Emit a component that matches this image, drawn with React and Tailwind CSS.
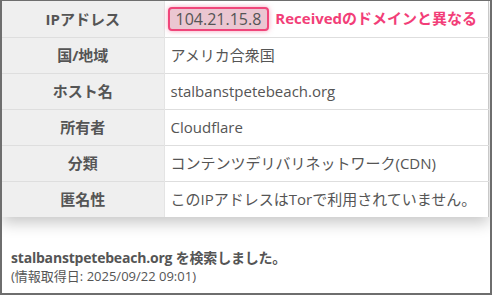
const rows = [
  { label: 'IPアドレス', value: null },
  { label: '国/地域', value: 'アメリカ合衆国' },
  { label: 'ホスト名', value: 'stalbanstpetebeach.org' },
  { label: '所有者', value: 'Cloudflare' },
  { label: '分類', value: 'コンテンツデリバリネットワーク(CDN)' },
  { label: '匿名性', value: 'このIPアドレスはTorで利用されていません。' },
];

export default function App() {
  return (
    <div
      className="w-[492px] h-[295px] overflow-hidden bg-white border-[#6e6e6e] border-t border-l-2 border-r-2 border-b-2 text-[#555]"
      style={{ fontFamily: '"Open Sans", "Noto Sans CJK JP", sans-serif' }}
    >
      <table className="w-[487px] border-collapse shadow-[0_6px_14px_rgba(0,0,0,0.22)] border-r border-[#c8c8c8]">
        <tbody>
          {rows.map((r, i) => (
            <tr key={r.label} className={i < rows.length - 1 ? 'border-b border-[#dedede]' : ''}>
              <th className="w-[162px] h-[36px] bg-[#efefef] text-center text-[15px] font-bold border-r border-[#e4e4e4] p-0">
                {r.label}
              </th>
              <td className="h-[36px] px-[6px] text-[15px] leading-none">
                {r.value ?? (
                  <div className="flex items-center gap-[6px] -ml-[3px]">
                    <span className="px-[6px] py-[2px] text-[16px] leading-[16px] rounded-[4px] border-2 border-[#f0457a] bg-[#ebc6d1] shadow-[0_0_5px_rgba(240,69,122,0.5)]">
                      104.21.15.8
                    </span>
                    <span
                      className="text-[#f23e78] font-bold text-[15px]"
                      style={{ textShadow: '0 0 3px #fff, 0 0 5px #fff' }}
                    >
                      Receivedのドメインと異なる
                    </span>
                  </div>
                )}
              </td>
            </tr>
          ))}
        </tbody>
      </table>
      <div className="pt-[32px] pl-[9px]">
        <p className="text-[14px] font-bold leading-[18px] tracking-[-0.2px]">stalbanstpetebeach.org を検索しました。</p>
        <p className="text-[13px] leading-[18px]">(情報取得日: 2025/09/22 09:01)</p>
      </div>
    </div>
  );
}
